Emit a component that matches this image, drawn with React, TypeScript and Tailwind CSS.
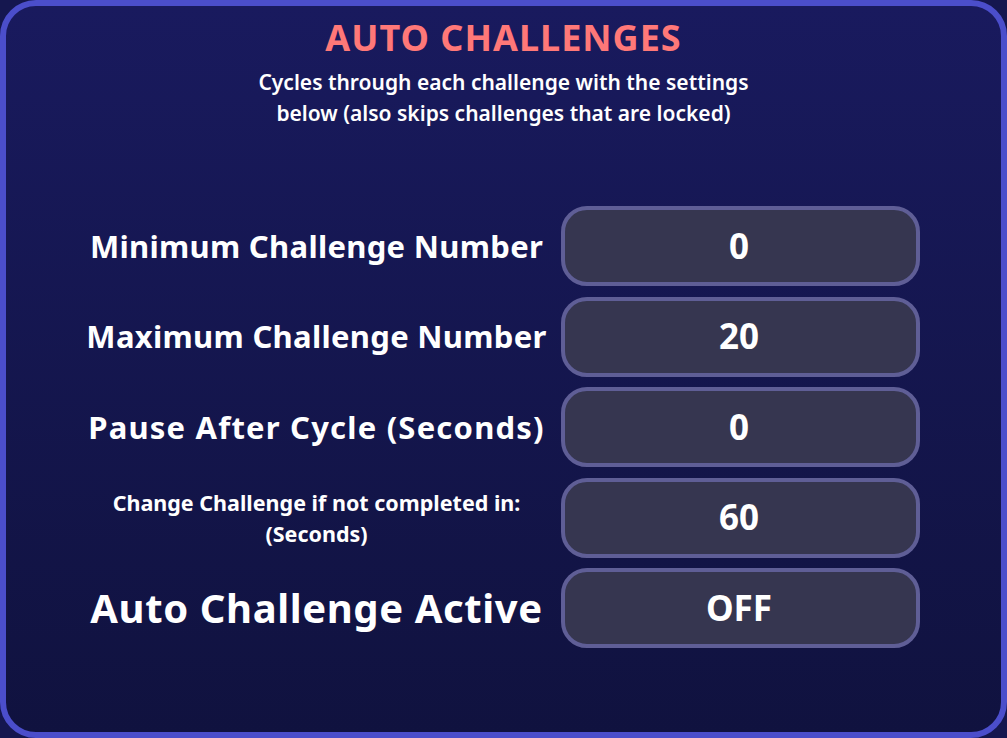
import React from "react";

type Row = {
  label: React.ReactNode;
  value: string;
  size: string;
};

const ROWS: Row[] = [
  { label: "Minimum Challenge Number", value: "0", size: "text-[31px] tracking-[0.3px]" },
  { label: "Maximum Challenge Number", value: "20", size: "text-[31px] tracking-[0.3px]" },
  { label: "Pause After Cycle (Seconds)", value: "0", size: "text-[31px] tracking-[1.2px]" },
  {
    label: (
      <>
        Change Challenge if not completed in:
        <br />
        (Seconds)
      </>
    ),
    value: "60",
    size: "text-[21.5px] leading-[31px]",
  },
  { label: "Auto Challenge Active", value: "OFF", size: "text-[40px] tracking-[0.6px]" },
];

const SettingRow: React.FC<{ row: Row }> = ({ row }) => (
  <div className="flex items-center h-[80px]">
    <div className={`w-[489px] text-center font-bold text-white whitespace-nowrap ${row.size}`}>{row.label}</div>
    <div className="w-[359px] h-[80px] rounded-[26px] border-4 border-[#5f5e96] bg-[#363650] flex items-center justify-center pr-[3px] text-[35px] font-bold text-white">
      {row.value}
    </div>
  </div>
);

const App: React.FC = () => {
  return (
    <div className="w-[1007px] h-[738px] bg-[#15174f]" style={{ fontFamily: '"Noto Sans", "Open Sans", sans-serif' }}>
      <div className="w-full h-full rounded-[36px] border-[6px] border-[#4b4ecb] bg-gradient-to-b from-[#191a5e] to-[#10123f] flex flex-col items-center">
        <h1 className="mt-[12px] text-[36px] leading-[40px] font-bold text-[#ff7878] tracking-[1px]">AUTO CHALLENGES</h1>
        <p className="mt-[9px] text-[21px] leading-[31px] font-semibold text-white text-center">
          Cycles through each challenge with the settings
          <br />
          below (also skips challenges that are locked)
        </p>
        <div className="mt-[77px] self-start ml-[66px] flex flex-col gap-[10.5px]">
          {ROWS.map((row, i) => (
            <SettingRow key={i} row={row} />
          ))}
        </div>
      </div>
    </div>
  );
};

export default App;
